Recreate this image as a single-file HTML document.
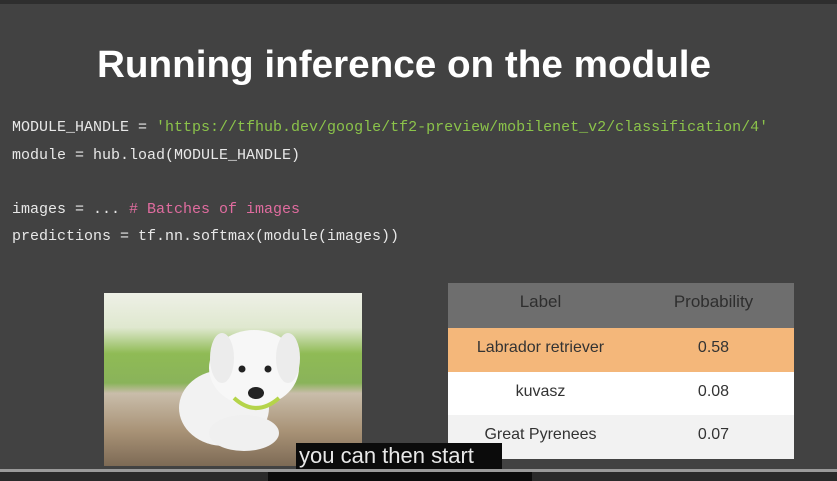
<!DOCTYPE html>
<html><head><style>
html,body{margin:0;padding:0}
body{width:837px;height:481px;background:#424242;position:relative;overflow:hidden;font-family:"Liberation Sans",sans-serif}
.code{position:absolute;left:12px;font-family:"Liberation Mono",monospace;font-size:15px;color:#e8e8e8;white-space:pre;line-height:18px}
.g{color:#8bc34a}.p{color:#e06c9f}
.tbl{position:absolute;left:448px;top:283px;width:346px}
.row{display:flex;height:44px;align-items:center;font-size:16px;color:#333;padding-bottom:4px;box-sizing:border-box}
.row div:first-child{width:185px;text-align:center}
.row div:last-child{flex:1;text-align:center}
.cap{position:absolute;background:#0b0b0b;color:#e8e8e8;font-size:22px;line-height:26px}
</style></head><body>
<div style="position:absolute;left:0;top:0;width:837px;height:4px;background:#2e2e2e"></div>
<svg style="position:absolute;left:0;top:0" width="837" height="100"><text x="97" y="77" font-family="Liberation Sans" font-weight="bold" font-size="38" fill="#fff" textLength="614" lengthAdjust="spacingAndGlyphs">Running inference on the module</text></svg>
<div class="code" style="top:119px">MODULE_HANDLE = <span class="g">'https://tfhub.dev/google/tf2-preview/mobilenet_v2/classification/4'</span></div>
<div class="code" style="top:147px">module = hub.load(MODULE_HANDLE)</div>
<div class="code" style="top:201px">images = ... <span class="p"># Batches of images</span></div>
<div class="code" style="top:228px">predictions = tf.nn.softmax(module(images))</div>
<svg style="position:absolute;left:104px;top:293px" width="258" height="173">
<defs><linearGradient id="bg" x1="0" y1="0" x2="0" y2="1"><stop offset="0" stop-color="#eef0e6"/><stop offset=".2" stop-color="#dfe8cf"/><stop offset=".35" stop-color="#8fbb55"/><stop offset=".52" stop-color="#8ab35a"/><stop offset=".58" stop-color="#c9bdaa"/><stop offset=".8" stop-color="#a89276"/><stop offset="1" stop-color="#7d6a55"/></linearGradient></defs>
<rect width="258" height="173" fill="url(#bg)"/>
<ellipse cx="120" cy="115" rx="45" ry="38" fill="#f2f2f2"/>
<ellipse cx="150" cy="75" rx="45" ry="38" fill="#f7f7f7"/>
<ellipse cx="118" cy="65" rx="12" ry="25" fill="#ececec"/>
<ellipse cx="184" cy="65" rx="12" ry="25" fill="#ececec"/>
<ellipse cx="140" cy="140" rx="35" ry="18" fill="#f0f0f0"/>
<circle cx="138" cy="76" r="3.5" fill="#222"/><circle cx="164" cy="76" r="3.5" fill="#222"/>
<ellipse cx="152" cy="100" rx="8" ry="6" fill="#222"/>
<path d="M130 105 Q152 125 175 105" stroke="#b5d44a" stroke-width="4" fill="none"/>
</svg>
<div class="tbl">
<div class="row" style="background:#6e6e6e;height:45px;font-size:17px;color:#2e2e2e;padding-bottom:8px"><div>Label</div><div>Probability</div></div>
<div class="row" style="background:#f4b77a"><div>Labrador retriever</div><div>0.58</div></div>
<div class="row" style="background:#fff;height:43px"><div>kuvasz</div><div>0.08</div></div>
<div class="row" style="background:#f2f2f2;height:44px"><div>Great Pyrenees</div><div>0.07</div></div>
</div>
<div style="position:absolute;left:0;top:469px;width:837px;height:3px;background:#9a9a9a"></div>
<div style="position:absolute;left:0;top:472px;width:837px;height:9px;background:#2a2a2a"></div>
<div class="cap" style="left:296px;top:443px;width:203px;height:26px;padding-left:3px">you can then start</div>
<div class="cap" style="left:268px;top:472px;width:264px;height:9px"></div>
</body></html>
